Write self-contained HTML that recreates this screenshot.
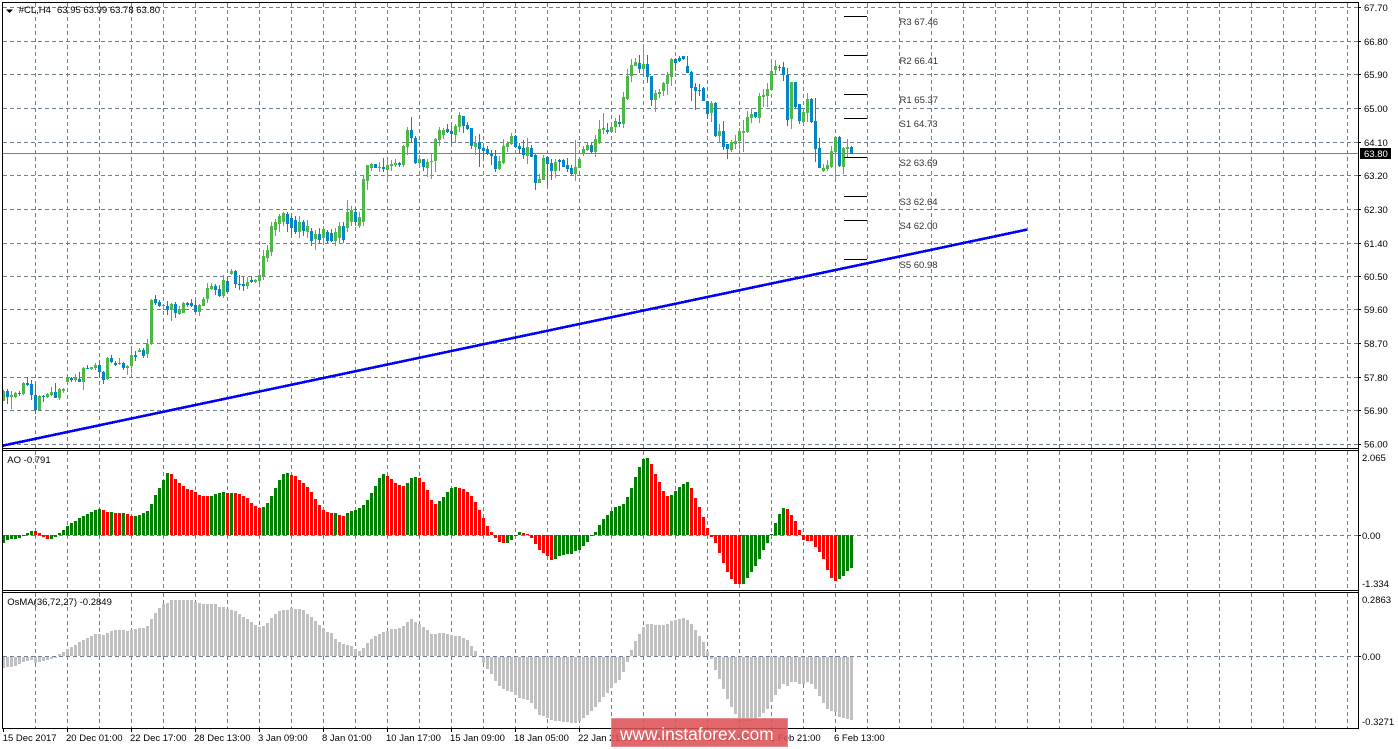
<!DOCTYPE html>
<html>
<head>
<meta charset="utf-8">
<title>#CL,H4</title>
<style>
html,body{margin:0;padding:0;background:#fff;width:1398px;height:749px;overflow:hidden}
svg{display:block;position:absolute;left:0;top:0}
text{font-family:"Liberation Sans",sans-serif;font-size:9.5px;fill:#000}
.p{fill:#333}
</style>
</head>
<body>
<svg xmlns="http://www.w3.org/2000/svg" width="1398" height="749" viewBox="0 0 1398 749">
<rect width="1398" height="749" fill="#fff"/>
<g id="grid" fill="none" stroke="#708090" stroke-width="1" stroke-dasharray="4 3" shape-rendering="crispEdges"></g>
<rect x="3" y="153" width="1355" height="1" fill="#708090"/>
<g id="bars" shape-rendering="crispEdges"></g>
<g fill="#000" shape-rendering="crispEdges">
<rect x="844" y="16" width="23" height="1"/>
<rect x="844" y="55" width="23" height="1"/>
<rect x="844" y="94" width="23" height="1"/>
<rect x="844" y="118" width="23" height="1"/>
<rect x="844" y="157" width="23" height="1"/>
<rect x="844" y="196" width="23" height="1"/>
<rect x="844" y="220" width="23" height="1"/>
<rect x="844" y="259" width="23" height="1"/>
</g>
<line x1="3" y1="445.6" x2="1027" y2="229.6" stroke="#0000ff" stroke-width="2.6" shape-rendering="crispEdges"/>
<g id="frame" fill="#000" shape-rendering="crispEdges">
<rect x="2" y="2" width="1357" height="1"/>
<rect x="2" y="448" width="1357" height="1"/>
<rect x="2" y="450" width="1357" height="1"/>
<rect x="2" y="590" width="1357" height="1"/>
<rect x="2" y="592" width="1357" height="1"/>
<rect x="2" y="728" width="1357" height="1"/>
<rect x="2" y="2" width="1" height="727"/>
<rect x="1358" y="2" width="1" height="727"/>
</g>
<g id="ticks" fill="#000" shape-rendering="crispEdges"></g>
<path d="M6 9.5h7l-3.5 3.5z" fill="#000"/>
<text x="18.7" y="13">#CL,H4</text>
<text x="57" y="13">63.95 63.99 63.78 63.80</text>
<text x="7.3" y="463">AO -0.791</text>
<text x="7.3" y="605">OsMA(36,72,27) -0.2849</text>
<text class="p" x="899.5" y="25">R3 67.46</text>
<text class="p" x="899.5" y="64">R2 66.41</text>
<text class="p" x="899.5" y="103">R1 65.37</text>
<text class="p" x="899.5" y="127">S1 64.73</text>
<text class="p" x="899.5" y="166">S2 63.69</text>
<text class="p" x="899.5" y="205">S3 62.64</text>
<text class="p" x="899.5" y="229">S4 62.00</text>
<text class="p" x="899.5" y="268">S5 60.98</text>
<text x="1364" y="11">67.70</text>
<text x="1364" y="45">66.80</text>
<text x="1364" y="78">65.90</text>
<text x="1364" y="112">65.00</text>
<text x="1364" y="146">64.10</text>
<rect x="1360" y="148" width="31" height="11" fill="#000"/>
<text x="1364" y="157" style="fill:#fff">63.80</text>
<text x="1364" y="179">63.20</text>
<text x="1364" y="213">62.30</text>
<text x="1364" y="247">61.40</text>
<text x="1364" y="280">60.50</text>
<text x="1364" y="313">59.60</text>
<text x="1364" y="347">58.70</text>
<text x="1364" y="381">57.80</text>
<text x="1364" y="414">56.90</text>
<text x="1364" y="447.5">56.00</text>
<text x="1362" y="461">2.065</text>
<text x="1362" y="539">0.00</text>
<text x="1362" y="587">-1.334</text>
<text x="1362" y="603">0.2863</text>
<text x="1362" y="660">0.00</text>
<text x="1362" y="725">-0.3271</text>
<text x="2.7" y="741">15 Dec 2017</text>
<text x="66" y="741">20 Dec 01:00</text>
<text x="130" y="741">22 Dec 17:00</text>
<text x="194" y="741">28 Dec 13:00</text>
<text x="258" y="741">3 Jan 09:00</text>
<text x="322" y="741">8 Jan 01:00</text>
<text x="386" y="741">10 Jan 17:00</text>
<text x="450" y="741">15 Jan 09:00</text>
<text x="514" y="741">18 Jan 05:00</text>
<text x="578" y="741">22 Jan 21:00</text>
<text x="642" y="741">25 Jan 13:00</text>
<text x="706" y="741">30 Jan 05:00</text>
<text x="770" y="741">1 Feb 21:00</text>
<text x="834" y="741">6 Feb 13:00</text>
<rect x="611" y="718" width="177" height="29" fill="#de5055" fill-opacity="0.87"/>
<rect x="611.5" y="718.5" width="176" height="28" fill="none" stroke="#e8a0a2" stroke-opacity="0.6"/>
<text x="620" y="740" style="font-size:17.3px;fill:#fff">www.instaforex.com</text>
</svg>
<script>
(function(){
var grid='',bars='',ticks='',i,k;
var hs=[7,41,74,108,142,175,209,243,276,309,343,377,410,444,535,656];
for(i=0;i<hs.length;i++){grid+='<path d="M3 '+(hs[i]+.5)+'H1358"/>';}
for(k=0;k<=41;k++){var x=35.5+32*k;grid+='<path d="M'+x+' 3V448M'+x+' 451V590M'+x+' 593V728"/>';}
document.getElementById('grid').innerHTML=grid;
for(i=0;i<hs.length;i++){ticks+='<rect x="1359" y="'+hs[i]+'" width="2" height="1"/>';}
for(k=0;k<14;k++){ticks+='<rect x="'+(3+64*k)+'" y="729" width="1" height="3"/>';}
document.getElementById('ticks').innerHTML=ticks;
function r(x,y,w,h,c){return '<rect x="'+x+'" y="'+y+'" width="'+w+'" height="'+h+'" fill="'+c+'"/>';}

var AO=[294,285,282,282,279,273,264,258,258,264,276,282,282,276,264,255,243,234,228,219,213,207,201,195,192,195,201,201,204,204,204,207,213,213,210,204,198,177,150,129,105,84,87,102,114,123,132,135,141,150,153,153,153,147,144,141,144,144,144,147,153,159,174,183,189,186,174,153,129,105,87,84,90,93,
105,114,126,141,162,180,195,201,204,204,210,213,204,198,195,189,180,165,144,123,99,87,93,102,114,120,123,114,99,96,99,111,135,165,177,168,156,141,129,126,129,132,141,153,171,195,219,243,261,279,291,294,294,285,273,261,264,267,279,297,315,324,333,345,342,333,330,327,327,318,315,303,291,273,261,240,
222,210,198,186,183,177,156,129,96,66,42,39,57,87,111,138,153,150,138,126,117,111,129,159,186,216,249,276,294,324,354,381,402,417,417,417,399,381,363,342,315,294,267,234,207,189,192,210,228,255,285,288,288,306,321,342,375,399,408,402,393,378,369];
var red=[[8,11],[25,26],[28,29],[31,32],[42,51],[56,56],[58,64],[72,82],[84,85],[96,100],[104,108],[114,125],[130,137],[162,166],[172,184],[196,208]];
function isRed(n){for(var j=0;j<red.length;j++){if(n>=red[j][0]&&n<=red[j][1])return true;}return false;}
for(i=0;i<AO.length;i++){
  var y=Math.round(445+AO[i]/3),c=isRed(i)?'#ff0000':'#008000';
  if(y<535)bars+=r(2+4*i,y,3,535-y,c);else if(y>535)bars+=r(2+4*i,535,3,y-535,c);
}

var OS=[231,228,228,225,219,213,210,207,216,213,210,207,203,200,192,186,177,171,165,156,150,144,138,132,132,135,129,123,120,120,120,123,120,117,114,114,108,87,69,54,42,39,30,30,30,30,30,30,36,39,42,42,42,42,51,51,57,60,63,72,81,87,96,105,111,108,99,84,72,63,60,60,54,57,57,60,72,81,93,105,114,126,129,147,156,162,165,168,177,183,174,159,147,138,132,126,123,117,117,114,108,96,87,96,102,111,120,132,132,129,129,132,
135,138,138,144,150,168,183,198,216,234,249,270,285,294,300,303,312,321,324,327,336,354,372,375,381,387,390,390,393,393,396,396,390,381,372,360,348,333,318,306,291,276,267,243,213,180,153,132,111,102,102,105,105,105,102,93,90,87,84,90,102,120,138,156,183,204,237,264,294,324,348,369,384,390,390,390,387,378,366,354,333,312,294,279,285,273,273,279,279,273,279,294,315,336,354,360,363,378,381,384,387];
for(i=0;i<OS.length;i++){
  var yy=Math.round(590+OS[i]/3);
  if(yy<656)bars+=r(2+4*i,yy,3,656-yy,'#c0c0c0');else if(yy>656)bars+=r(2+4*i,657,3,yy-657+1,'#c0c0c0');
}

var A=[[1,362,392,360,394],[0,362,380,357,402],[1,375,381,362,417],[1,369,381,366,384],[0,369,373,363,378],[1,339,372,336,375],[0,339,346,322,348],[0,342,375,330,390],[0,375,420,342,432],[1,378,420,375,420],[0,378,381,375,396],[1,372,381,370,384],[1,366,375,351,378],[0,366,384,339,384],[1,357,384,354,390],[1,357,363,354,369],[1,324,336,322,338],[0,324,330,320,336],[1,324,330,312,336],[0,327,336,306,336],[1,294,336,291,360],[0,294,296,285,297],[1,292,297,290,300],[1,285,295,279,299],[0,285,306,279,321],[0,306,330,303,342],[1,264,327,261,330],[0,264,277,255,279],[0,279,285,273,288],[1,279,283,264,285],[0,279,294,276,300],[1,288,294,285,315],[1,255,288,240,309],[0,255,261,243,273],[1,240,245,234,246],[0,240,258,234,264],[1,222,252,207,264],[1,90,222,87,225],[0,87,99,75,105],[0,96,108,90,111],[1,105,108,102,120],[0,108,120,93,135],[1,102,120,99,153],[0,102,129,96,144],[1,117,132,108,135],[1,99,129,96,129],[0,99,105,96,111],[0,99,108,87,111],[0,105,126,93,129],[1,105,126,102,138],[1,87,108,81,108],[1,54,87,39,99],[1,48,57,39,60],[0,48,60,42,75],[0,57,78,45,81],[1,30,78,15,84],[0,33,66,21,69],[1,3,12,-3,15],[0,3,42,0,54],[0,42,46,15,60],[0,42,48,21,63],[1,36,48,21,57],[0,30,36,18,39],[1,30,36,27,39],[1,15,33,9,48]];
var B=[[1,256,276,250,280],[1,250,258,245,262],[1,226,252,222,256],[1,222,230,219,236],[1,216,224,214,232],[1,213,222,212,226],[0,214,224,212,232],[0,218,228,216,234],[0,220,232,216,234],[1,222,232,216,238],[0,222,231,220,236],[1,226,232,220,238],[0,231,241,228,246],[1,234,239,230,250],[0,234,240,228,244],[1,229,238,226,242],[0,232,241,230,243],[0,233,241,229,242],[1,232,241,228,246],[1,226,238,222,244],[0,226,240,222,243],[1,212,228,200,232],[1,210,222,206,226],[0,212,222,208,226],[1,217,226,212,228],[1,179,222,176,226]];
var C=[[1,225,273,225,300],[1,222,234,219,243],[0,222,234,222,234],[1,231,233,216,246],[0,231,237,204,246],[1,225,240,210,270],[1,222,228,210,243],[1,219,225,207,231],[0,219,225,216,231],[1,168,225,165,231],[1,120,171,111,195],[0,120,144,81,156],[0,144,219,138,222],[1,207,219,195,231],[0,207,231,207,243],[1,216,234,207,261],[1,213,215,192,267],[1,147,213,144,246],[1,120,150,111,168],[1,120,135,114,147],[0,117,126,102,129],[0,123,132,108,159],[1,108,135,102,159],[1,75,111,66,126],[0,78,108,78,129],[0,105,117,96,120],[0,114,168,114,177],[1,159,171,138,195],[0,156,177,132,231],[0,174,183,168,207],[0,177,192,168,195],[0,192,198,180,225],[0,198,237,180,246],[1,213,237,198,240],[1,168,219,147,222],[1,159,171,153,186],[1,138,162,129,165],[0,138,171,135,174],[0,168,177,159,192],[0,174,195,150,207],[1,171,198,144,222],[0,174,201,165,201],[0,195,279,192,300],[1,267,279,252,279],[1,204,270,195,270],[0,201,222,198,288],[0,219,243,207,270],[1,216,243,207,264],[0,210,216,207,243],[0,210,231,207,231],[0,225,237,204,246],[0,234,252,225,255],[1,231,252,150,273],[1,207,234,204,234],[1,177,192,168,198],[1,165,180,159,183],[0,165,186,159,189],[1,147,186,135,201],[1,117,159,90,162]];
var D=[[1,264,270,219,282],[0,270,276,249,282],[1,261,276,249,276],[1,243,261,234,279],[0,246,252,225,261],[1,171,252,156,264],[1,108,177,87,180],[1,75,108,57,126],[1,66,78,54,78],[0,69,87,45,99],[1,72,87,12,99],[0,72,111,45,129],[0,108,180,108,198],[1,159,180,150,216],[1,156,162,147,174],[1,129,153,126,168],[1,105,132,96,165],[1,57,111,54,138],[0,57,69,54,93],[0,54,63,48,66],[0,48,57,48,60],[0,78,99,48,99],[0,96,144,93,183],[0,141,153,129,210],[0,150,153,132,168],[0,144,183,141,183],[0,183,222,183,237],[1,189,219,183,246],[0,189,288,186,291],[1,273,288,252,309],[0,273,321,243,330],[0,312,327,312,357],[1,306,330,300,336],[1,303,312,285,327],[1,273,303,264,327],[1,273,279,240,336],[1,231,276,213,279],[1,222,234,204,249],[0,216,231,216,234],[1,168,234,159,249],[1,165,171,147,201],[1,147,168,129,201],[1,93,150,69,153],[1,78,90,60,102],[0,81,84,75,93],[0,81,105,66,123],[0,105,240,84,258],[1,126,237,126,267],[0,126,201,126,204],[0,192,243,192,252],[1,216,246,210,249],[1,177,219,159,246],[0,177,246,174,249],[0,243,327,174,366],[0,324,384,294,384],[1,384,393,372,396],[1,375,387,360,393],[1,333,381,318,384],[1,291,336,288,417],[0,291,378,288,381],[1,324,381,321,402],[1,321,327,297,354],[0,321,342,318,342]];
function sec(list,start,base,s){
  for(var j=0;j<list.length;j++){
    var d=list[j],n=start+j,col=d[0]?'#4db848':'#0585c6';
    var t=Math.round(base+d[1]*s),b=Math.round(base+d[2]*s),wt=Math.round(base+d[3]*s),wb=Math.round(base+d[4]*s);
    if(b<=t)b=t+1;
    if(wb<=wt)wb=wt+1;
    bars+=r(3+4*n,wt,1,wb-wt,col);
    bars+=r(2+4*n,t,3,b-t,col);
  }
}
sec(A,0,270,1/3);
sec(B,65,0,1);
sec(C,91,90,1/3);
sec(D,150,40,1/3);
document.getElementById('bars').innerHTML=bars;
})();
</script>
</body>
</html>
